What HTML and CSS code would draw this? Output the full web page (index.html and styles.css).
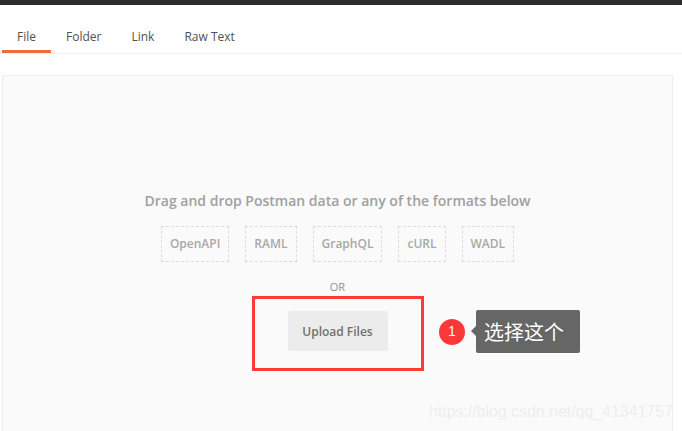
FILE: index.html
```html
<!DOCTYPE html>
<html lang="en">
<head>
    <meta charset="UTF-8">
    <meta name="viewport" content="width=device-width, initial-scale=1.0">
    <title>Import</title>
    <link rel="stylesheet" href="styles.css">
</head>
<body>
    <div class="top-bar"></div>

    <div class="tabs">
        <div class="tab active">File</div>
        <div class="tab">Folder</div>
        <div class="tab">Link</div>
        <div class="tab">Raw Text</div>
    </div>

    <div class="drop-zone">
        <div class="drop-title">Drag and drop Postman data or any of the formats below</div>
        <div class="formats">
            <div class="format">OpenAPI</div>
            <div class="format">RAML</div>
            <div class="format">GraphQL</div>
            <div class="format">cURL</div>
            <div class="format">WADL</div>
        </div>
        <div class="or">OR</div>
        <button type="button" class="btn-upload">Upload Files</button>

        <!-- annotation on top of the screenshot -->
        <div class="mark-box"></div>
        <div class="mark-note">
            <span class="mark-number">1</span>
            <span class="mark-label">选择这个</span>
        </div>
    </div>

    <div class="watermark">https://blog.csdn.net/qq_41341757</div>
</body>
</html>
```

FILE: styles.css
```css
html, body {
    height: 431px;
    overflow: hidden;
}

body {
    margin: 0;
    position: relative;
    background-color: #fff;
    font-family: "Open Sans", sans-serif;
    color: #505050;
}

.top-bar {
    height: 5px;
    background-color: #2d2d2d;
}

.tabs {
    display: flex;
    height: 48px;
    margin: 0 0 0 2px;
    border-bottom: 1px solid #f3f3f3;
}

.tab {
    padding: 0 15px;
    font-size: 12px;
    line-height: 64px;
    height: 45px;
    border-bottom: 3px solid transparent;
}

.tab.active {
    border-bottom-color: #f26b3a;
}

.drop-zone {
    position: relative;
    box-sizing: border-box;
    width: 671px;
    height: 356px;
    margin: 21px 0 0 2px;
    padding-top: 115px;
    display: flex;
    flex-direction: column;
    align-items: center;
    background-color: #fafafa;
    border: 1px solid #ededed;
    border-bottom: none;
}

.drop-title {
    font-size: 14px;
    font-weight: 600;
    line-height: 20px;
    color: #a0a0a0;
}

.formats {
    display: flex;
    gap: 16px;
    margin-top: 15px;
}

.format {
    padding: 0 8px;
    height: 36px;
    line-height: 34px;
    box-sizing: border-box;
    border: 1px dashed #dcdcdc;
    font-size: 12px;
    font-weight: 600;
    color: #a8a8a8;
}

.or {
    margin-top: 18px;
    font-size: 11px;
    line-height: 14px;
    color: #909090;
}

.btn-upload {
    width: 100px;
    height: 40px;
    margin-top: 17px;
    padding: 0;
    border: none;
    border-radius: 3px;
    background-color: #ececec;
    font-family: "Open Sans", sans-serif;
    font-size: 12px;
    font-weight: 600;
    color: #707070;
}

.mark-box {
    position: absolute;
    left: 249px;
    top: 220px;
    width: 172px;
    height: 75px;
    box-sizing: border-box;
    border: 3px solid #fb3a3a;
}

.mark-note {
    position: absolute;
    left: 436px;
    top: 234px;
    display: flex;
    align-items: center;
}

.mark-number {
    width: 26px;
    height: 26px;
    border-radius: 50%;
    background-color: #fb3737;
    color: #fff;
    font-family: "Liberation Sans", sans-serif;
    font-size: 14px;
    line-height: 24px;
    text-align: center;
}

.mark-label {
    position: relative;
    margin-left: 11px;
    width: 104px;
    height: 43px;
    box-sizing: border-box;
    padding-left: 8px;
    border-radius: 2px;
    background-color: #666;
    color: #fff;
    font-family: "Noto Sans CJK SC", sans-serif;
    font-size: 20px;
    line-height: 43px;
}

.mark-label::before {
    content: "";
    position: absolute;
    left: -5px;
    top: 16px;
    border-top: 5px solid transparent;
    border-bottom: 5px solid transparent;
    border-right: 5px solid #666;
}

.watermark {
    position: absolute;
    left: 429px;
    top: 402px;
    font-family: "Liberation Sans", sans-serif;
    font-size: 16px;
    letter-spacing: -0.05px;
    line-height: 20px;
    color: #eeeeee;
    white-space: nowrap;
}
```
